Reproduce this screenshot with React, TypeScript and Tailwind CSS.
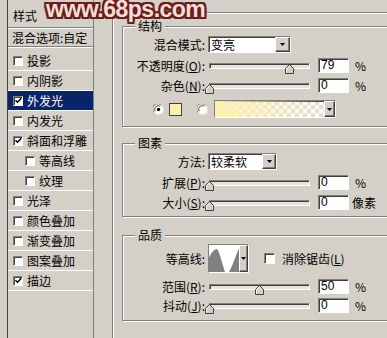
import type { ReactNode } from "react";

const sunken =
  "border border-t-[#808080] border-l-[#808080] border-b-white border-r-white shadow-[inset_1px_1px_0_#404040]";
const raised =
  "bg-[#d4d0c8] border border-t-white border-l-white border-b-[#404040] border-r-[#404040] shadow-[inset_-1px_-1px_0_#808080]";

const styles = [
  { label: "投影" },
  { label: "内阴影" },
  { label: "外发光", checked: true, active: true },
  { label: "内发光" },
  { label: "斜面和浮雕", checked: true },
  { label: "等高线", sub: true },
  { label: "纹理", sub: true },
  { label: "光泽" },
  { label: "颜色叠加" },
  { label: "渐变叠加" },
  { label: "图案叠加" },
  { label: "描边", checked: true },
];

function Arrow() {
  return (
    <svg width="5" height="3" viewBox="0 0 5 3">
      <path d="M0 0h5L2.5 3z" fill="#000" />
    </svg>
  );
}

function DropBtn({ className }: { className: string }) {
  return (
    <div className={`${raised} flex items-center justify-center ${className}`}>
      <Arrow />
    </div>
  );
}

function CheckBox({ checked, big }: { checked?: boolean; big?: boolean }) {
  return (
    <div
      className={`${sunken} flex shrink-0 items-center justify-center bg-white ${
        big ? "h-[11px] w-[11px]" : "h-[10px] w-[10px]"
      }`}
    >
      {checked && (
        <svg width="7" height="7" viewBox="0 0 7 7">
          <path d="M0.5 3.2L2.5 5.2L6.3 1.2" fill="none" stroke="#000" strokeWidth="1.5" />
        </svg>
      )}
    </div>
  );
}

function Radio({ checked }: { checked?: boolean }) {
  return (
    <svg width="11" height="11" viewBox="0 0 12 12" className="shrink-0">
      <circle cx="6" cy="6" r="5.5" fill="#fff" />
      <path d="M1.2 9A5.3 5.3 0 0 1 9 1.2" fill="none" stroke="#808080" />
      <path d="M2.3 8A4.2 4.2 0 0 1 8 2.3" fill="none" stroke="#404040" />
      <path d="M10.8 3A5.3 5.3 0 0 1 3 10.8" fill="none" stroke="#e0ddd6" />
      {checked && <circle cx="6" cy="6" r="1.8" fill="#000" />}
    </svg>
  );
}

function Slider({ value }: { value: number }) {
  return (
    <div className={`relative ml-[4px] h-[6px] w-[101px] shrink-0 bg-[#e6e3de] ${sunken}`}>
      <svg
        className="absolute top-0"
        style={{ left: value - 5 }}
        width="9"
        height="10"
        viewBox="0 0 9 10"
      >
        <path d="M4.5 0.5L8.5 4.5V9.5H0.5V4.5Z" fill="#d4d0c8" stroke="#404040" />
        <path d="M1.5 8.5V4.9L4.5 1.9" fill="none" stroke="#fff" />
      </svg>
    </div>
  );
}

function NumField({ value }: { value: string }) {
  return (
    <div
      className={`ml-[8px] h-[15px] w-[31px] shrink-0 bg-white pl-[2px] font-['Liberation_Sans',sans-serif] text-[12px] leading-[13px] ${sunken}`}
    >
      {value}
    </div>
  );
}

function Label({ children }: { children: ReactNode }) {
  return <div className="w-[82px] shrink-0 whitespace-nowrap text-right">{children}</div>;
}

function Group({ title, className, children }: { title: string; className: string; children: ReactNode }) {
  return (
    <div
      className={`relative w-[290px] border border-[#808080] shadow-[inset_1px_1px_0_#fff,1px_1px_0_#fff] ${className}`}
    >
      <span className="absolute -top-[8px] left-[12px] bg-[#d4d0c8] px-[3px] leading-[14px]">
        {title}
      </span>
      {children}
    </div>
  );
}

export default function App() {
  return (
    <div className="relative flex h-[338px] w-[387px] overflow-hidden bg-[#d4d0c8] font-['Noto_Sans_CJK_SC',sans-serif] text-[12px] leading-[14px] text-black">
      {/* style list */}
      <div className="ml-[7px] flex h-full w-[87px] shrink-0 flex-col border-l border-r border-l-[#404040] border-r-[#808080]">
        <div className="flex h-[28px] items-center border-b border-[#808080] pl-[5px] pt-[4px]">样式</div>
        <div className="h-px bg-white" />
        <div className="flex h-[18px] items-center border-b border-[#808080] pl-[4px] whitespace-nowrap">
          混合选项:自定
        </div>
        <div className="h-[4px] border-t border-white" />
        {styles.map((s) => (
          <div
            key={s.label}
            className={`flex h-[20px] items-center border-b border-white ${
              s.active ? "bg-[#0a246a] text-white" : ""
            } ${s.sub ? "pl-[17px]" : "pl-[5px]"}`}
          >
            <CheckBox checked={s.checked} />
            <span className="ml-[4px] whitespace-nowrap">{s.label}</span>
          </div>
        ))}
      </div>

      {/* outer glow settings */}
      <div className="ml-[18px] mt-[12px] h-[340px] w-[300px] shrink-0 border border-[#808080] pl-[9px] pt-[13px] shadow-[inset_1px_1px_0_#fff,1px_1px_0_#fff]">
        <Group title="结构" className="pb-[8px]">
          <div className="mt-[9px] flex h-[17px] items-center">
            <Label>混合模式:</Label>
            <div className={`ml-[3px] flex h-[17px] w-[83px] shrink-0 bg-white ${sunken}`}>
              <span className="flex-1 pl-[2px] leading-[15px]">变亮</span>
              <DropBtn className="h-[15px] w-[15px]" />
            </div>
          </div>
          <div className="mt-[5px] flex h-[15px] items-center">
            <Label>
              不透明度(<u>O</u>):
            </Label>
            <Slider value={80} />
            <NumField value="79" />
            <span className="ml-[6px]">%</span>
          </div>
          <div className="mt-[5px] flex h-[15px] items-center">
            <Label>
              杂色(<u>N</u>):
            </Label>
            <Slider value={0} />
            <NumField value="0" />
            <span className="ml-[6px]">%</span>
          </div>
          <div className="mt-[7px] flex h-[18px] items-center pl-[30px]">
            <Radio checked />
            <div className="ml-[5px] h-[13px] w-[13px] shrink-0 border border-[#404040] bg-[#fcefb2]" />
            <div className="ml-[15px]">
              <Radio />
            </div>
            <div className={`ml-[6px] flex h-[18px] w-[122px] shrink-0 ${sunken} bg-[repeating-conic-gradient(#dcdcdc_0_25%,#fff_0_50%)] bg-[length:8px_8px]`}>
              <div className="flex-1 bg-[linear-gradient(to_right,#fcefb2,rgba(252,239,178,0.6)_45%,rgba(252,239,178,0))]" />
              <DropBtn className="h-full w-[11px]" />
            </div>
          </div>
        </Group>

        <Group title="图素" className="mt-[16px] pb-[6px]">
          <div className="mt-[9px] flex h-[17px] items-center">
            <Label>方法:</Label>
            <div className={`ml-[3px] flex h-[17px] w-[69px] shrink-0 bg-white ${sunken}`}>
              <span className="flex-1 pl-[2px] leading-[15px] whitespace-nowrap">较柔软</span>
              <DropBtn className="h-[15px] w-[14px]" />
            </div>
          </div>
          <div className="mt-[5px] flex h-[15px] items-center">
            <Label>
              扩展(<u>P</u>):
            </Label>
            <Slider value={0} />
            <NumField value="0" />
            <span className="ml-[6px]">%</span>
          </div>
          <div className="mt-[5px] flex h-[15px] items-center">
            <Label>
              大小(<u>S</u>):
            </Label>
            <Slider value={0} />
            <NumField value="0" />
            <span className="ml-[3px]">像素</span>
          </div>
        </Group>

        <Group title="品质" className="mt-[18px] pb-[7px]">
          <div className="mt-[8px] flex h-[29px] items-center">
            <Label>等高线:</Label>
            <div className={`ml-[3px] flex h-[29px] w-[41px] shrink-0 ${sunken}`}>
              <svg width="30" height="27" viewBox="0 0 30 27" className="bg-white">
                <path d="M0 27V13C2 8 5 4 8 4C11 8 13 18 16 27Z" fill="#808080" />
                <path d="M20 27C24 20 27 10 30 3V27Z" fill="#808080" />
              </svg>
              <DropBtn className="h-full w-[9px]" />
            </div>
            <div className="ml-[15px]">
              <CheckBox big />
            </div>
            <span className="ml-[7px] whitespace-nowrap">
              消除锯齿(<u>L</u>)
            </span>
          </div>
          <div className="mt-[6px] flex h-[15px] items-center">
            <Label>
              范围(<u>R</u>):
            </Label>
            <Slider value={50} />
            <NumField value="50" />
            <span className="ml-[6px]">%</span>
          </div>
          <div className="mt-[4px] flex h-[15px] items-center">
            <Label>
              抖动(<u>J</u>):
            </Label>
            <Slider value={0} />
            <NumField value="0" />
            <span className="ml-[6px]">%</span>
          </div>
        </Group>
      </div>

      {/* watermark */}
      <div className="pointer-events-none absolute left-[46px] top-[-2px] font-['Liberation_Sans',sans-serif] text-[23px] font-bold leading-[23px] tracking-[-0.5px] text-[#f4ddd4] [text-shadow:2px_0_0_#6b1c1c,-2px_0_0_#6b1c1c,0_2px_0_#6b1c1c,0_-2px_0_#6b1c1c,2px_2px_0_#6b1c1c,-2px_-2px_0_#6b1c1c,2px_-2px_0_#6b1c1c,-2px_2px_0_#6b1c1c]">
        www.68ps.com
      </div>
    </div>
  );
}
